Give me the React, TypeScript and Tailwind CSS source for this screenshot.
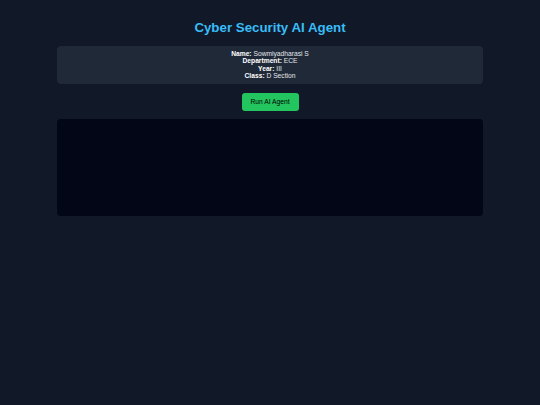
export default function App() {
  return (
    <div
      className="min-h-[405px] w-full bg-[#111827] text-white"
      style={{ fontFamily: '"Liberation Sans", Arial, sans-serif' }}
    >
      <div className="mx-auto flex w-[426px] flex-col items-center pt-[20px]">
        <h1 className="text-[13.3px] font-bold leading-[16px] text-[#38bdf8]">
          Cyber Security AI Agent
        </h1>
        <div className="mt-[10px] w-full rounded-[4px] bg-[#1f2937] py-[4px] text-center text-[6.7px] leading-[7.4px] text-[#e5e7eb]">
          <p>
            <b className="text-white">Name:</b> Sowmiyadharasi S
          </p>
          <p>
            <b className="text-white">Department:</b> ECE
          </p>
          <p>
            <b className="text-white">Year:</b> III
          </p>
          <p>
            <b className="text-white">Class:</b> D Section
          </p>
        </div>
        <button className="mt-[9px] flex h-[18px] w-[57px] items-center justify-center rounded-[3px] bg-[#22c55e] text-[6.7px] text-black">
          Run AI Agent
        </button>
        <div className="mt-[8.3px] h-[97px] w-full rounded-[4px] bg-[#020617]" />
      </div>
    </div>
  );
}
